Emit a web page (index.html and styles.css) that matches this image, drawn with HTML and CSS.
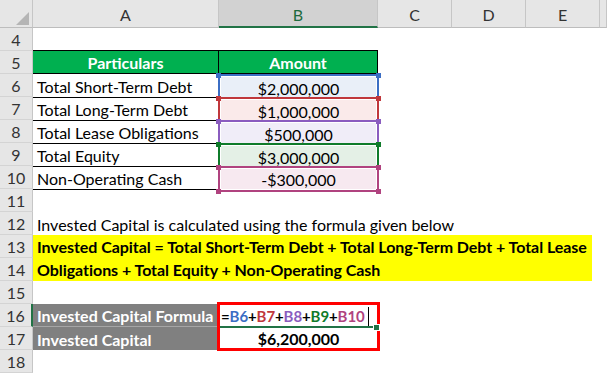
FILE: index.html
```html
<!DOCTYPE html>
<html>
<head>
<meta charset="utf-8">
<link rel="stylesheet" href="styles.css">
</head>
<body>
<div class="sheet">
  <div class="corner"><svg width="33" height="28" viewBox="0 0 33 28"><polygon points="29,12 29,25 16,25" fill="#b5b5b5"/></svg></div>
  <div class="ch">A</div>
  <div class="ch active">B</div>
  <div class="ch">C</div>
  <div class="ch">D</div>
  <div class="ch">E</div>
  <div class="ch"></div>

  <div class="rh">4</div><div class="fill"></div>

  <div class="rh">5</div>
  <div class="th first">Particulars</div>
  <div class="th">Amount</div>
  <div class="rest"></div>

  <div class="rh">6</div>
  <div class="ta">Total Short-Term Debt</div>
  <div class="tb"><div class="box blue"><i class="h tl"></i><i class="h tr"></i><span>$2,000,000</span></div></div>
  <div class="rest"></div>

  <div class="rh">7</div>
  <div class="ta">Total Long-Term Debt</div>
  <div class="tb"><div class="box red"><i class="h tl"></i><i class="h tr"></i><span>$1,000,000</span></div></div>
  <div class="rest"></div>

  <div class="rh">8</div>
  <div class="ta">Total Lease Obligations</div>
  <div class="tb"><div class="box purple"><i class="h tl"></i><i class="h tr"></i><span>$500,000</span></div></div>
  <div class="rest"></div>

  <div class="rh">9</div>
  <div class="ta">Total Equity</div>
  <div class="tb"><div class="box green"><i class="h tl"></i><i class="h tr"></i><span>$3,000,000</span></div></div>
  <div class="rest"></div>

  <div class="rh">10</div>
  <div class="ta">Non-Operating Cash</div>
  <div class="tb"><div class="box magenta"><i class="h tl"></i><i class="h tr"></i><i class="h bl"></i><i class="h br"></i><span>-$300,000</span></div></div>
  <div class="rest"></div>

  <div class="rh">11</div><div class="fill"></div>

  <div class="rh">12</div>
  <div class="note">Invested Capital is calculated using the formula given below</div>

  <div class="rh">13</div>
  <div class="formula-text">Invested Capital = Total Short-Term Debt + Total Long-Term Debt + Total Lease Obligations + Total Equity + Non-Operating Cash</div>
  <div class="rh">14</div>

  <div class="rh">15</div><div class="fill"></div>

  <div class="rh sel">16</div>
  <div class="gray sep">Invested Capital Formula</div>
  <div class="calc">
    <div class="edit"><span class="k">=</span><span class="c-blue">B6</span><span class="k">+</span><span class="c-red">B7</span><span class="k">+</span><span class="c-purple">B8</span><span class="k">+</span><span class="c-green">B9</span><span class="k">+</span><span class="c-magenta">B10</span><span class="caret"></span><i class="fh"></i></div>
    <div class="result">$6,200,000</div>
  </div>
  <div class="rest"></div>

  <div class="rh">17</div>
  <div class="gray">Invested Capital</div>
  <div class="rest"></div>

  <div class="rh">18</div><div class="fill"></div>
</div>
</body>
</html>
```

FILE: styles.css
```css
html, body {
  margin: 0;
  padding: 0;
  background: #ffffff;
}

body {
  font-family: Lato, "Liberation Sans", sans-serif;
  font-size: 16px;
  color: #000;
}

.sheet {
  display: grid;
  grid-template-columns: 33px 186px 159px 74px 74px 74px 7px;
  grid-template-rows: 28px repeat(15, 23px);
  width: 607px;
  height: 373px;
  overflow: hidden;
}

.corner {
  grid-column: 1;
  background: #e6e6e6;
  border-right: 1px solid #c6c6c6;
  border-bottom: 1px solid #bdbdbd;
  box-sizing: border-box;
  overflow: hidden;
  line-height: 0;
}

.ch {
  background: #e6e6e6;
  border-right: 1px solid #c6c6c6;
  border-bottom: 1px solid #bdbdbd;
  box-sizing: border-box;
  display: flex;
  align-items: center;
  justify-content: center;
  color: #333;
  font-size: 16px;
  padding-top: 2px;
}

.ch.active {
  background: #d2d2d2;
  color: #1e6b3e;
  border-bottom: 2px solid #217346;
}

.rh {
  grid-column: 1;
  background: #e6e6e6;
  border-right: 1px solid #c6c6c6;
  border-bottom: 1px solid #d4d4d4;
  box-sizing: border-box;
  display: flex;
  align-items: center;
  justify-content: center;
  color: #333;
  font-size: 16px;
  padding-top: 1px;
}

.rh.sel {
  border-right: 2px solid #217346;
}

.fill {
  grid-column: 2 / -1;
}

.rest {
  grid-column: 4 / -1;
}

.th {
  grid-column: 3;
  background: #00b050;
  color: #fff;
  font-weight: bold;
  display: flex;
  align-items: center;
  justify-content: center;
  border-top: 1px solid #000;
  border-right: 1px solid #000;
  border-bottom: 1px solid #000;
  box-sizing: border-box;
  height: 24px;
  margin-top: -1px;
}

.th.first {
  grid-column: 2;
}

.ta {
  grid-column: 2;
  border-bottom: 1px solid #000;
  box-sizing: border-box;
  display: flex;
  align-items: center;
  padding-left: 4px;
  padding-top: 1px;
  white-space: nowrap;
  height: 24px;
}

.tb {
  grid-column: 3;
  position: relative;
}

.box {
  position: relative;
  margin: 0 -1px 0 -1px;
  height: 25px;
  box-sizing: border-box;
  border: 2px solid;
  border-bottom-width: 0;
  padding: 1px 1px 0 1px;
}

.box.magenta {
  border-bottom-width: 2px;
  padding-bottom: 1px;
  height: 26px;
}

.box span {
  display: flex;
  align-items: center;
  justify-content: center;
  height: 100%;
  padding-top: 1px;
  box-sizing: border-box;
}

.blue { border-color: #3b6ec4; }
.blue span { background: #e9eff8; }
.red { border-color: #c0373c; }
.red span { background: #faeaea; }
.purple { border-color: #8a5cbf; }
.purple span { background: #f0edf8; }
.green { border-color: #0f7b2a; }
.green span { background: #e4f0e6; }
.magenta { border-color: #b0437f; }
.magenta span { background: #f7e9f0; }

.h {
  position: absolute;
  width: 5px;
  height: 5px;
  z-index: 2;
}
.blue .h { background: #3b6ec4; }
.red .h { background: #c0373c; }
.purple .h { background: #8a5cbf; }
.green .h { background: #0f7b2a; }
.magenta .h { background: #b0437f; }
.h.tl { left: -4px; top: -3px; }
.h.tr { right: -4px; top: -3px; }
.h.bl { left: -4px; bottom: -4px; }
.h.br { right: -4px; bottom: -4px; }

.note {
  grid-column: 2 / -1;
  display: flex;
  align-items: center;
  padding-left: 4px;
  padding-top: 1px;
  white-space: nowrap;
}

.formula-text {
  grid-column: 2 / -1;
  grid-row: span 2;
  background: #ffff00;
  margin-right: 15px;
  font-weight: bold;
  padding: 0 0 0 4px;
  line-height: 23px;
  letter-spacing: -0.05px;
}

.gray {
  grid-column: 2;
  background: #808080;
  color: #fff;
  font-weight: bold;
  display: flex;
  align-items: center;
  padding-left: 4px;
  padding-top: 1px;
  margin-right: 2px;
  white-space: nowrap;
}

.gray.sep {
  border-bottom: 1px solid #a6a6a6;
}

.calc {
  grid-column: 3;
  grid-row: span 2;
  margin: -2px -2px -1px -2px;
  border: 3px solid #ff0000;
  display: flex;
  flex-direction: column;
  font-weight: bold;
}

.edit {
  height: 21px;
  display: flex;
  align-items: center;
  padding-left: 1px;
  padding-top: 1px;
  border-bottom: 2px solid #217346;
  margin: 0 2px 0 0;
  position: relative;
  white-space: nowrap;
  font-size: 15px;
  letter-spacing: -0.1px;
}

.fh {
  position: absolute;
  right: -4px;
  bottom: -4px;
  width: 5px;
  height: 5px;
  background: #217346;
  border: 1px solid #fff;
  box-sizing: content-box;
  margin: -1px;
}

.k { color: #000; }
.c-blue { color: #3b6ec4; }
.c-red { color: #c0373c; }
.c-purple { color: #8a5cbf; }
.c-green { color: #0f7b2a; }
.c-magenta { color: #b0437f; }

.caret {
  display: inline-block;
  width: 1px;
  height: 19px;
  background: #000;
  margin-left: 3px;
}

.result {
  flex: 1;
  display: flex;
  align-items: center;
  justify-content: center;
  padding-top: 1px;
}
```
